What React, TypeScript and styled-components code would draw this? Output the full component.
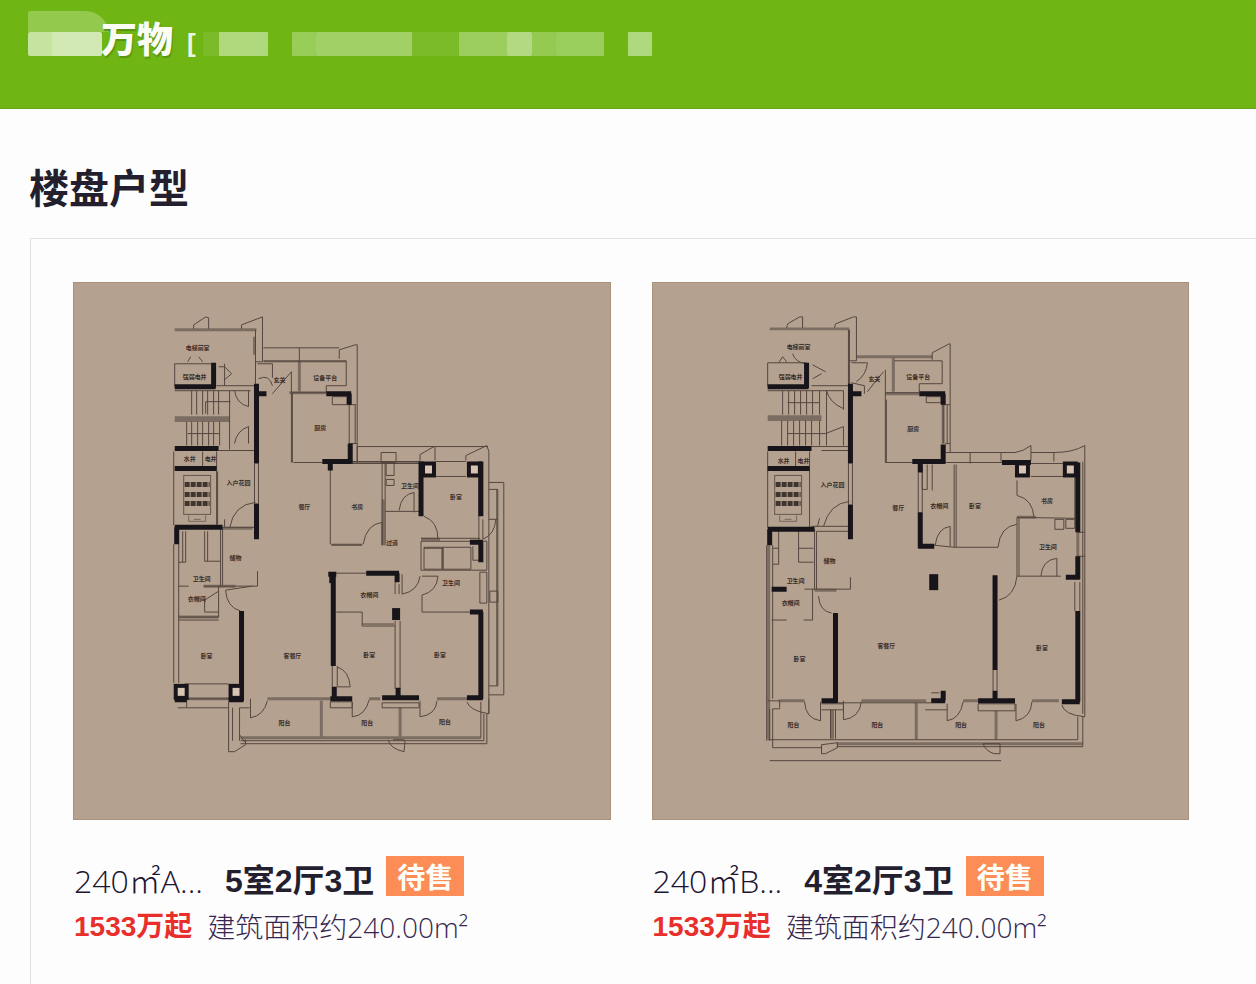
import React from 'react';
import styled, { createGlobalStyle } from 'styled-components';

const GlobalStyle = createGlobalStyle`
  * { box-sizing: border-box; }
  body {
    margin: 0;
    background: #fdfdfe;
    color: #231f2e;
    font-family: 'Liberation Sans', 'Noto Sans CJK SC', sans-serif;
  }
`;

const Page = styled.div`
  overflow: hidden;
`;

const Header = styled.header`
  display: flex;
  align-items: flex-start;
  height: 109px;
  padding: 10px 28px;
  background: #6fb514;
  border-bottom: 1px solid #67a51c;
`;

const Brand = styled.div`
  position: relative;
  display: flex;
  align-items: flex-start;
  padding-left: 73px;
`;

const BrandTab = styled.span`
  position: absolute;
  left: 0;
  top: 1px;
  width: 81px;
  height: 45px;
  border-radius: 2px 24px 0 2px;
  background: linear-gradient(#93ca4d 21px, transparent 21px);
`;

const BrandBar = styled.span`
  position: absolute;
  left: 0;
  top: 22px;
  width: 74px;
  height: 24px;
  border-radius: 2px;
  background: linear-gradient(90deg, #c7e3a0 24px, #d2e9b3 24px);
`;

const BrandName = styled.span`
  position: relative;
  font-size: 36px;
  line-height: 62px;
  font-weight: 900;
  color: #fbfdf5;
  text-shadow: 1px 2px 1px #5b9212;
`;

const Bracket = styled.span`
  margin-left: 14px;
  font-size: 26px;
  line-height: 66px;
  font-weight: 700;
  color: #eef7de;
`;

const MaskRow = styled.div`
  display: flex;
  padding-top: 22px;
`;

const Mask = styled.span<{ $w: number; $c: string; $gap?: number }>`
  width: ${(p) => p.$w}px;
  height: 24px;
  margin-left: ${(p) => p.$gap ?? 0}px;
  border-radius: 1px;
  background: ${(p) => p.$c};
`;

const Main = styled.main`
  padding: 50px 0 0 30px;
`;

const Title = styled.h1`
  margin: 0 0 18px -1px;
  font-size: 40px;
  line-height: 61px;
  font-weight: 700;
`;

const Panel = styled.section`
  display: grid;
  grid-template-columns: 1fr 1fr;
  gap: 41px;
  padding: 43px 67px 44px 42px;
  border-top: 1px solid #dfe1e6;
  border-left: 1px solid #dfe1e6;
`;

const Card = styled.article`
  min-width: 0;
`;

const PlanSvg = styled.svg`
  display: block;
  width: 100%;
  aspect-ratio: 1;
  background: #b5a18f;
  border: 1px solid #a8927c;
`;

const Row = styled.div`
  display: flex;
  align-items: center;
  padding-left: 1px;
  white-space: nowrap;
`;

const NameRow = styled(Row)`
  height: 48px;
  margin-top: 34px;
`;

const PriceRow = styled(Row)`
  height: 40px;
  margin-top: 5px;
`;

const Name = styled.span`
  font: 300 32px/48px 'Open Sans', 'Noto Sans CJK SC', sans-serif;
  margin-top: 6px;
  color: #1c1430;
`;

const Rooms = styled.h2`
  margin: 7px 12px 0 22px;
  font-size: 32px;
  line-height: 48px;
  font-weight: 700;
`;

const Badge = styled.span`
  height: 40px;
  align-self: flex-start;
  margin-top: 2px;
  padding: 0 11px;
  background: #fd8d57;
  color: #fffdf9;
  font-size: 28px;
  line-height: 45px;
  font-weight: 700;
`;

const Price = styled.strong`
  font-size: 28px;
  line-height: 40px;
  color: #e92f2c;
`;

const Area = styled.span`
  margin-left: 15px;
  font: 300 28px/40px 'Open Sans', 'Noto Sans CJK SC', sans-serif;
  color: #35274f;
`;

type Label = [string, number, number];

interface Plan {
  origin: number;
  title: string;
  thin: string;
  grey: string;
  wall: string;
  blocks: [number, number, number, number][];
  columns: [number, number][];
  lift: number;
  labels: Label[];
}

const planA: Plan = {
  origin: 73,
  title: 'A户型平面图',
  thin: `M193 329V325L205 317L208 318V329M241 329V325L262 317V362H255M255 330V384M174 364H211M174 364V387
    M187 362L190 357M198 357L202 362M224 364V386M218 367H224L231 374L224 380M216 386H256V391M174 391H250
    M191 391V415M196 391V415M202 391V415M207 391V415M213 391V415M218 391V415M205 402H230M205 402V414
    M229 391V450M234 391Q236 404 248 407V391M186 422V446M191 422V446M197 422V446M202 422V446M208 422V446M213 422V446M219 422V446M187 434H219
    M234 444Q236 431 248 427V444M218 451H256M173 452V526M216 452V526M202 452V467M217 472V525M254 464V504M258 464V504
    M229 529Q233 505 255 503M222 528H256M224 520V528
    M263 348H339M299 348V361M263 361H346V386H326V393M263 362H346M339 359V350L355 345H357V463M257 364H272V378M272 386Q269 374 258 379
    M272 394L291 372V463M292 393V463M292 393H326M293 463H322M332 397H347V405H332ZM349 405V444M355 405V444M347 405H356M349 444H357M357 447H488
    M357 463V447M350 462H420M350 464H420M381 453H396V463H381ZM386 464H394V476H386ZM386 480H394V486H386Z
    M420 462V455L434 447H435V461M466 461V456L487 446L489 452V715M436 462H466M436 477H466
    M330 463V545M331 545H362M331 546H362M363 545Q366 525 382 523V546M382 463V546M385 463V546M385 512H421M399 511Q401 495 414 493V513
    M424 517Q438 522 438 540M421 539H480M421 542H487V571H421ZM424 548H443V570H424ZM424 549H443M442 548V570M443 548H471V570H443ZM473 547V561H482
    M479 477V543M483 520V540Q495 535 496 520M489 483H504V696H489M489 490H498V687H489M497 490V687M489 520H498M480 573V604H487V573Z
    M335 574H366M395 583V595M399 585V595M402 575V595Q418 592 420 577M422 577H438Q437 592 422 596V613H470
    M490 592H498V603H490ZM336 613H362V627H395M362 625H394M395 622V690M400 622V690M332 667V688M337 667V688M337 668Q349 672 350 688H337
    M330 703H352V709H330ZM352 703V718Q365 717 369 701M382 704H419V709H382ZM420 702V718Q436 716 437 702M467 703Q470 712 489 715V700
    M240 742H484V715M481 739V703M240 745H487V715M388 741Q390 750 404 753L405 741M393 741H404
    M173 545V684M178 545V684M220 528V588M204 532V562H220M207 532V562M185 532V563H178M182 532V563M222 528V586M178 587H188M203 587H257V572
    M218 587V618H178M178 621H218M204 600V613H218M204 601L218 592M225 591Q226 608 240 612M225 591L252 587
    M184 685H228M184 700H228M177 709H228M186 700V709M228 703V753H234L245 746V741M239 742V709H249M232 709V742M250 700V719Q263 717 267 702M239 736L245 744`,
  grey: `M174 330H256M254 337V355M299 361V393M174 418H229M174 421H229M289 393H326M383 500V546M222 529H252M203 587H235
    M178 618H218M184 700H228M267 700H330M321 702V740M400 709V738M240 739H481M369 700H380M437 700H467
    M421 540H440M350 463H420`,
  wall: `M213 363V388M174 387H215M174 449H218M174 469H216M256 384V464M256 394H266M256 504V540M174 528H222M176 528V545
    M326 394H351M349 394V405M350 444V464M322 462H351M330 462V471M421 462V517M481 462V517M470 543H483M481 543V563
    M328 575H336M333 574V667M366 574H399M397 574V583M334 688V700M330 700H352M382 699H419M398 689V700M467 699H483
    M470 613H483M481 613V700M241 612V702M228 701H243M174 701H186`,
  blocks: [[392, 609, 8, 12], [329, 573, 5, 11]],
  columns: [[421, 463], [467, 463], [228, 686], [173, 686]],
  lift: 183,
  labels: [['电梯前室', 197, 350], ['强弱电井', 194, 379], ['玄关', 279, 382], ['设备平台', 325, 380], ['厨房', 320, 430], ['水井', 189, 462],
    ['电井', 210, 462], ['入户花园', 238, 486], ['餐厅', 304, 510], ['书房', 357, 510], ['卫生间', 410, 489], ['卧室', 456, 500], ['过道', 392, 546],
    ['储物', 235, 561], ['卫生间', 201, 582], ['衣帽间', 196, 602], ['衣帽间', 369, 598], ['卫生间', 451, 586], ['卧室', 206, 659],
    ['客餐厅', 292, 659], ['卧室', 369, 658], ['卧室', 440, 658], ['阳台', 284, 726], ['阳台', 367, 726], ['阳台', 445, 725]],
};

const planB: Plan = {
  origin: 651,
  title: 'B户型平面图',
  thin: `M785 328L786 324L798 317H801V328M833 328L834 324L852 317H855V361H848M848 330V385M847 330V385M791 354Q794 363 805 364M766 387V363H805
    M777 363L781 357L785 362M811 365L824 372M811 379L820 374M810 386H848M766 391H842V410M825 391Q828 403 842 409
    M781 391V415M787 391V415M793 391V415M799 391V415M805 391V415M811 391V415M818 391V415M786 403H818M825 391V446
    M780 421V446M786 421V446M792 421V446M798 421V446M804 421V446M810 421V446M818 421V446M786 434H824L842 427V446M810 447H848M820 451H848
    M766 452V528M808 452V528M794 452V467M847 464V505M851 464V505M822 527Q828 504 848 502M810 527H848M816 527L818 519
    M850 363H866Q865 375 855 382M850 383L863 386V394M866 392L882 372M884 370V463H911M884 393H918M885 400V463M893 361H941V384H918V392
    M931 360V353L948 344H949V453M925 397H940V403H925ZM942 405V444M946 405V444M940 405H949M944 444H949M944 453H1014Q1022 452 1030 446V461
    M1030 453H1053Q1072 453 1084 446V718M1082 462V715M969 453V464M1000 453V462M1053 453V462M944 463H1001M1030 464H1062M1030 477H1062
    M917 473V513M921 473V513M921 465V490M926 465V490H921M931 465V491M953 465V548M955 465V548M934 546Q936 529 949 527V547M933 546L953 548H997
    M997 548Q999 527 1016 525M1016 518V577M1018 519V577M1016 577Q1014 597 998 601M1016 481V496Q1032 500 1033 518M1016 518L1074 519
    M1054 520H1063V530H1054ZM1065 520H1074V529H1065ZM1016 577H1060M1040 577Q1041 561 1056 559V577M1074 477V520M1076 533H1084M1076 557H1084
    M1074 583V612M1079 583V612M992 671V692M996 671V692M977 705H1014V712H977ZM1061 706Q1063 716 1084 718M946 705V722Q959 720 962 703
    M1015 705V722Q1030 719 1031 703M924 711H946M930 694H938M766 741H1077V718M835 748H1082V718M982 745Q984 752 993 755H999V745Z
    M765 546V742M771 546V700M777 531V565H771M771 549H777M797 531V563H812M797 549H812M813 530V590M815 532V590M815 532H847M803 590H849V578
    M811 590V621H802M770 621H785M817 597Q818 612 830 614M766 702H778V710H771M803 703Q804 720 819 722V703M820 705H842V711H820M842 702V721Q858 719 860 703
    M771 710V749H820M768 710V742M829 711V740M834 711V740M820 746L836 744V749L824 755H820ZM836 704H930M768 762H1000`,
  grey: `M768 329H848M855 357H931M892 358V392M766 417H820M766 420H820M884 394H918M1016 518H1035M777 702H803M860 702H925M962 702H977
    M1031 702H1058M915 704V741M995 712V741M831 711V740M835 745H1082M767 546V740M813 591H835M1077 533V557M942 405V444`,
  wall: `M805 363V388M766 387H807M766 449H810M766 469H808M849 384V464M849 394H860M849 505V540M766 530H813M768 530V546M918 394H944M942 394V405
    M942 445V464M911 462H944M919 463V473M919 513V549M917 547H933M1001 463H1030M1077 463V533M1077 557V580M1065 578H1079
    M994 576V671M994 692V702M1077 612V703M977 702H1014M1061 703H1079M930 702H944M942 692V702M770 590H785M834 614V704M820 702H836`,
  blocks: [[928, 575, 9, 16]],
  columns: [[1014, 463], [1062, 463]],
  lift: 773,
  labels: [['电梯前室', 797, 349], ['强弱电井', 789, 379], ['玄关', 873, 381], ['设备平台', 917, 379], ['厨房', 912, 431], ['水井', 782, 464],
    ['电井', 802, 464], ['入户花园', 831, 488], ['餐厅', 897, 511], ['衣帽间', 938, 509], ['卧室', 974, 509], ['书房', 1046, 504],
    ['卫生间', 1047, 550], ['储物', 828, 564], ['卫生间', 794, 584], ['衣帽间', 789, 606], ['卧室', 798, 662], ['客餐厅', 885, 649],
    ['卧室', 1041, 651], ['阳台', 792, 728], ['阳台', 876, 728], ['阳台', 960, 728], ['阳台', 1038, 728]],
};

function FloorPlan({ plan }: { plan: Plan }) {
  return (
    <PlanSvg viewBox={`${plan.origin} 283 537 537`} role="img" aria-label={plan.title}>
      <g fill="none">
        <path d={plan.grey} stroke="#7c6d62" strokeWidth="3" />
        <path d={plan.thin} stroke="#54463f" strokeWidth="1" />
        <path d={plan.wall} stroke="#17141a" strokeWidth="5" />
        <rect x={plan.lift} y="476" width="27" height="39" stroke="#66584f" />
        <path
          d={`M${plan.lift + 1} 485h25m-25 10h25m-25 9h25`}
          stroke="#40362f"
          strokeWidth="5"
          strokeDasharray="5 1"
        />
        <path d={`M${plan.lift + 5} 516v6h17v-6m-12 4h7`} stroke="#75665c" />
        {plan.columns.map(([x, y]) => (
          <rect key={`${x}-${y}`} x={x + 2} y={y + 1} width="11" height="12" fill="#d8c4b3" stroke="#17141a" strokeWidth="4" />
        ))}
      </g>
      {plan.blocks.map(([x, y, w, h]) => (
        <rect key={`${x}-${y}`} x={x} y={y} width={w} height={h} fill="#17141a" />
      ))}
      <g fill="#3a2d28" fontSize="6" fontWeight="700" textAnchor="middle" fontFamily="'Noto Sans CJK SC', sans-serif">
        {plan.labels.map(([text, x, y]) => (
          <text key={`${x}-${y}`} x={x} y={y}>{text}</text>
        ))}
      </g>
    </PlanSvg>
  );
}

const units = [
  { plan: planA, name: '240㎡A...', rooms: '5室2厅3卫' },
  { plan: planB, name: '240㎡B...', rooms: '4室2厅3卫' },
];

export default function App() {
  return (
    <Page>
      <GlobalStyle />
      <Header>
        <Brand>
          <BrandTab />
          <BrandBar />
          <BrandName>万物</BrandName>
        </Brand>
        <Bracket>[</Bracket>
        <MaskRow>
          <Mask $gap={7} $w={16} $c="#7bbb29" />
          <Mask $w={49} $c="#b0d97d" />
          <Mask $gap={24} $w={24} $c="#98cd58" />
          <Mask $w={96} $c="#a0d066" />
          <Mask $w={47} $c="#7bbb29" />
          <Mask $w={48} $c="#9bce5e" />
          <Mask $w={25} $c="#b3da82" />
          <Mask $w={24} $c="#94ca51" />
          <Mask $w={48} $c="#9ace5c" />
          <Mask $gap={24} $w={24} $c="#b0d97d" />
        </MaskRow>
      </Header>
      <Main>
        <Title>楼盘户型</Title>
        <Panel>
          {units.map((unit) => (
            <Card key={unit.name}>
              <FloorPlan plan={unit.plan} />
              <NameRow>
                <Name>{unit.name}</Name>
                <Rooms>{unit.rooms}</Rooms>
                <Badge>待售</Badge>
              </NameRow>
              <PriceRow>
                <Price>1533万起</Price>
                <Area>建筑面积约240.00m²</Area>
              </PriceRow>
            </Card>
          ))}
        </Panel>
      </Main>
    </Page>
  );
}
